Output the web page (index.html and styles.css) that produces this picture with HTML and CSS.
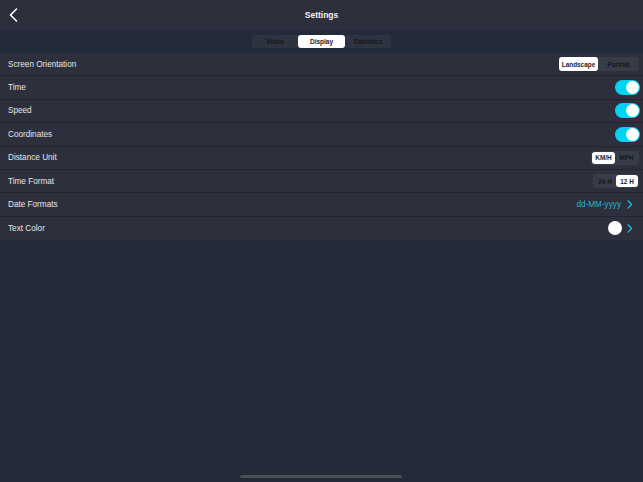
FILE: index.html
```html
<!DOCTYPE html>
<html lang="en">
<head>
  <meta charset="UTF-8">
  <meta name="viewport" content="width=device-width, initial-scale=1.0">
  <title>Settings</title>
  <link rel="stylesheet" href="styles.css">
</head>
<body>
  <header class="topbar">
    <button class="back" aria-label="Back">
      <svg width="9" height="14" viewBox="0 0 9 14"><path d="M7.5 1 L1.5 7 L7.5 13" fill="none" stroke="#fff" stroke-width="1.6" stroke-linecap="round" stroke-linejoin="round"/></svg>
    </button>
    <h1>Settings</h1>
  </header>

  <nav class="tabs">
    <div class="seg seg-tabs">
      <span>Video</span>
      <span class="on">Display</span>
      <span>Statistics</span>
    </div>
  </nav>

  <section class="list">
    <div class="row">
      <span class="label">Screen Orientation</span>
      <div class="seg seg-orient">
        <span class="on">Landscape</span>
        <span>Portrait</span>
      </div>
    </div>
    <div class="row">
      <span class="label">Time</span>
      <span class="toggle"><i></i></span>
    </div>
    <div class="row">
      <span class="label">Speed</span>
      <span class="toggle"><i></i></span>
    </div>
    <div class="row">
      <span class="label">Coordinates</span>
      <span class="toggle"><i></i></span>
    </div>
    <div class="row">
      <span class="label">Distance Unit</span>
      <div class="seg seg-unit">
        <span class="on">KM/H</span>
        <span>MPH</span>
      </div>
    </div>
    <div class="row">
      <span class="label">Time Format</span>
      <div class="seg seg-time">
        <span>24 H</span>
        <span class="on">12 H</span>
      </div>
    </div>
    <div class="row">
      <span class="label">Date Formats</span>
      <div class="value">
        <span class="date">dd-MM-yyyy</span>
        <svg class="chev" width="6" height="9" viewBox="0 0 6 9"><path d="M1.2 1 L4.6 4.5 L1.2 8" fill="none" stroke="#1fb4d8" stroke-width="1.4" stroke-linecap="round" stroke-linejoin="round"/></svg>
      </div>
    </div>
    <div class="row">
      <span class="label">Text Color</span>
      <div class="value">
        <span class="dot"></span>
        <svg class="chev" width="6" height="9" viewBox="0 0 6 9"><path d="M1.2 1 L4.6 4.5 L1.2 8" fill="none" stroke="#1fb4d8" stroke-width="1.4" stroke-linecap="round" stroke-linejoin="round"/></svg>
      </div>
    </div>
  </section>

  <div class="home-bar"></div>
</body>
</html>
```

FILE: styles.css
```css
:root {
  --bg: #232b3b;
  --panel: #2d303c;
  --line: #23262f;
  --cyan: #00d3f3;
  --link: #1fb4d8;
  --text: #e4e5e8;
  --seg-bg: #383c48;
  --seg-text: #15171c;
}
* { box-sizing: border-box; margin: 0; padding: 0; }
html, body { height: 100%; }
body {
  font-family: "Liberation Sans", Arial, sans-serif;
  background: var(--bg);
  color: var(--text);
  position: relative;
  overflow: hidden;
}
.topbar {
  height: 30px;
  background: var(--panel);
  display: flex;
  align-items: center;
  justify-content: center;
  position: relative;
}
.topbar h1 {
  font-size: 8.5px;
  font-weight: bold;
  color: #f2f2f4;
}
.back {
  position: absolute;
  left: 9px;
  top: 8px;
  background: none;
  border: none;
  display: flex;
}
.tabs {
  height: 23px;
  display: flex;
  justify-content: center;
  align-items: center;
}
.seg {
  display: flex;
  background: var(--seg-bg);
  border-radius: 3px;
  padding: 1px;
}
.seg span {
  display: flex;
  align-items: center;
  justify-content: center;
  font-size: 6.4px;
  font-weight: bold;
  color: var(--seg-text);
  border-radius: 3px;
}
.seg span.on {
  background: #fff;
  color: #1a1b1f;
}
.seg-tabs { height: 13px; background: #2e3341; padding: 0; }
.seg-tabs span { width: 46.5px; font-size: 6.5px; }
.seg-orient { height: 14px; padding: 0; }
.seg-orient span:first-child { width: 39px; }
.seg-orient span:last-child { width: 41px; }
.seg-unit { height: 14px; }
.seg-unit span { width: 23px; }
.seg-time { height: 14px; }
.seg-time span { width: 22px; }
.list {
  background: var(--panel);
}
.row {
  height: 23.4px;
  border-bottom: 1px solid var(--line);
  display: flex;
  align-items: center;
  justify-content: space-between;
  padding: 0 4px 0 8px;
}
.row:last-child { border-bottom: none; }
.label {
  font-size: 8.2px;
  color: var(--text);
}
.toggle {
  width: 25px;
  height: 15px;
  border-radius: 8px;
  background: var(--cyan);
  display: flex;
  align-items: center;
  justify-content: flex-end;
  padding-right: 1px;
  margin-right: -1px;
}
.toggle i {
  width: 13px;
  height: 13px;
  border-radius: 50%;
  background: #fff;
}
.value {
  display: flex;
  align-items: center;
  gap: 6px;
  padding-right: 6px;
}
.value .dot + .chev { margin-left: -1px; }
.date {
  font-size: 8.2px;
  color: var(--link);
}
.dot {
  width: 14px;
  height: 14px;
  border-radius: 50%;
  background: #fff;
}
.home-bar {
  position: absolute;
  left: 240px;
  bottom: 4px;
  width: 162px;
  height: 3px;
  border-radius: 2px;
  background: #4b4f53;
}
```
